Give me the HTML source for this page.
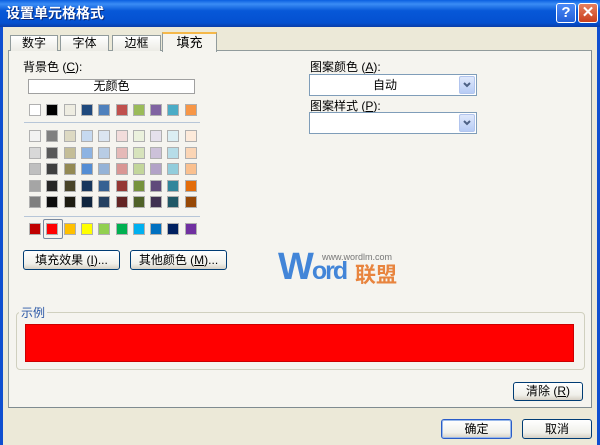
<!DOCTYPE html>
<html><head><meta charset="utf-8">
<style>
*{margin:0;padding:0;box-sizing:border-box}
body{width:600px;height:445px;overflow:hidden;background:#ece9d8;font-family:"Liberation Sans","Noto Sans CJK SC","WenQuanYi Zen Hei",sans-serif;font-size:12px;color:#000;position:relative}
.a{position:absolute}
#title{left:0;top:0;width:600px;height:27px;background:linear-gradient(#0a5fe0 0%,#3a8cf5 15%,#0758d8 40%,#0450d0 85%,#0a3ea8 100%);color:#fff;font-weight:bold;font-size:14px;line-height:27px;padding-left:6px;text-shadow:1px 1px #0a2a7a}
.lb{left:0;top:27px;width:3px;height:418px;background:#0f4fd0}
.rb{left:597px;top:27px;width:3px;height:418px;background:#0f4fd0}
.tb{width:20px;height:20px;top:3px;border:1px solid #fff;border-radius:3px;color:#fff;font-weight:bold;font-size:15px;text-align:center;line-height:18px}
.tab{top:35px;height:16px;background:linear-gradient(#fff,#ecebe5);border:1px solid #919b9c;border-bottom:none;text-align:center;font-size:12px;line-height:15px}
#panel{left:8px;top:50px;width:584px;height:358px;background:#f5f4ef;border:1px solid #919b9c;border-right-color:#7f8b90;border-bottom-color:#7f8b90}
.sw{width:12px;height:12px;border:1px solid #b0b0b0}
.sep{height:1px;background:#b7c6d8}
.btn{border:1px solid #003c74;border-radius:3px;background:linear-gradient(#fff,#f0f0ea 70%,#d6d0c5);text-align:center;font-size:12px}
.combo{left:309px;width:168px;height:22px;border:1px solid #7f9db9;background:#fff}
.dd{position:absolute;right:1px;top:1px;width:16px;height:18px;background:linear-gradient(#dfe8fb,#b7ccf5);border:1px solid #b2c5ee;border-radius:2px}
</style></head><body>
<div class="a" id="title">设置单元格格式</div>
<div class="a tb" style="left:556px;background:linear-gradient(#4b8af7,#2360d8)">?</div>
<div class="a tb" style="left:578px;background:linear-gradient(#e7805e,#c9401d)">✕</div>
<div class="a lb"></div><div class="a rb"></div>

<div class="a" id="panel"></div>
<div class="a tab" style="left:10px;width:48px">数字</div>
<div class="a tab" style="left:60px;width:49px">字体</div>
<div class="a tab" style="left:112px;width:49px">边框</div>
<div class="a tab" style="left:162px;top:32px;width:55px;height:20px;background:#f5f4ef;border-top:2px solid #f5b84a;line-height:17px;font-size:13px">填充</div>

<div class="a" style="left:23px;top:58px">背景色 (<u>C</u>):</div>
<div class="a" style="left:28px;top:79px;width:167px;height:15px;border:1px solid #a0a0a0;background:#fff;text-align:center;line-height:13px">无颜色</div>
<div id="sw"></div>
<div class="a sep" style="left:24px;top:122px;width:176px"></div>
<div class="a sep" style="left:24px;top:216px;width:176px"></div>

<div class="a btn" style="left:23px;top:250px;width:97px;height:20px;line-height:18px">填充效果 (<u>I</u>)...</div>
<div class="a btn" style="left:130px;top:250px;width:97px;height:20px;line-height:18px">其他颜色 (<u>M</u>)...</div>

<div class="a" style="left:310px;top:58px">图案颜色 (<u>A</u>):</div>
<div class="a combo" style="top:74px"><div style="text-align:center;line-height:20px;padding-right:16px">自动</div><div class="dd"><svg width="14" height="16" viewBox="0 0 14 16"><path d="M4 6 L7 9 L10 6" stroke="#4d6185" stroke-width="2" fill="none"/></svg></div></div>
<div class="a" style="left:310px;top:97px">图案样式 (<u>P</u>):</div>
<div class="a combo" style="top:112px"><div class="dd"><svg width="14" height="16" viewBox="0 0 14 16"><path d="M4 6 L7 9 L10 6" stroke="#4d6185" stroke-width="2" fill="none"/></svg></div></div>

<div class="a" style="left:278px;top:247px;color:#2f7ad6;font-weight:bold;font-size:38px;line-height:40px;letter-spacing:-2px;opacity:.9">W<span style="font-size:25px">ord</span></div>
<div class="a" style="left:322px;top:252px;color:#777;font-size:9px">www.wordlm.com</div>
<div class="a" style="left:355px;top:259px;color:#e8843e;font-weight:bold;font-size:21px">联盟</div>

<div class="a" style="left:16px;top:312px;width:569px;height:58px;border:1px solid #d0d0bf;border-radius:4px"></div>
<div class="a" style="left:19px;top:304px;background:#f5f4ef;color:#2a57a6;padding:0 2px">示例</div>
<div class="a" style="left:25px;top:324px;width:549px;height:38px;background:#ff0000;border:1px solid #c00"></div>

<div class="a btn" style="left:513px;top:382px;width:70px;height:19px;line-height:17px">清除 (<u>R</u>)</div>
<div class="a btn" style="left:441px;top:419px;width:71px;height:20px;line-height:18px;border-color:#2a5cc8;box-shadow:inset 0 0 0 1px #98b8ea">确定</div>
<div class="a btn" style="left:522px;top:419px;width:70px;height:20px;line-height:18px">取消</div>

<script>
var r1=["#ffffff","#000000","#eeece1","#1f497d","#4f81bd","#c0504d","#9bbb59","#8064a2","#4bacc6","#f79646"];
var g=[["#f2f2f2","#7f7f7f","#ddd9c3","#c6d9f0","#dbe5f1","#f2dcdb","#ebf1dd","#e5e0ec","#dbeef3","#fdeada"],
["#d8d8d8","#595959","#c4bd97","#8db3e2","#b8cce4","#e5b9b7","#d7e3bc","#ccc1d9","#b7dde8","#fbd5b5"],
["#bfbfbf","#3f3f3f","#938953","#548dd4","#95b3d7","#d99694","#c3d69b","#b2a2c7","#92cddc","#fac08f"],
["#a5a5a5","#262626","#494429","#17365d","#366092","#953734","#76923c","#5f497a","#31859b","#e36c09"],
["#7f7f7f","#0c0c0c","#1d1b10","#0f243e","#244061","#632423","#4f6128","#3f3151","#205867","#974806"]];
var r3=["#c00000","#ff0000","#ffc000","#ffff00","#92d050","#00b050","#00b0f0","#0070c0","#002060","#7030a0"];
var h="";function row(c,y){for(var i=0;i<10;i++){h+='<div class="a sw" style="left:'+(29+i*17.3)+'px;top:'+y+'px;background:'+c[i]+'"></div>';}}
row(r1,104);var ys=[130,147,163,180,196];for(var j=0;j<5;j++)row(g[j],ys[j]);row(r3,223);
h+='<div class="a" style="left:43px;top:219px;width:20px;height:20px;border:1px solid #7a8aa0;border-radius:2px"></div>';
document.getElementById("sw").innerHTML=h;
</script>
</body></html>
